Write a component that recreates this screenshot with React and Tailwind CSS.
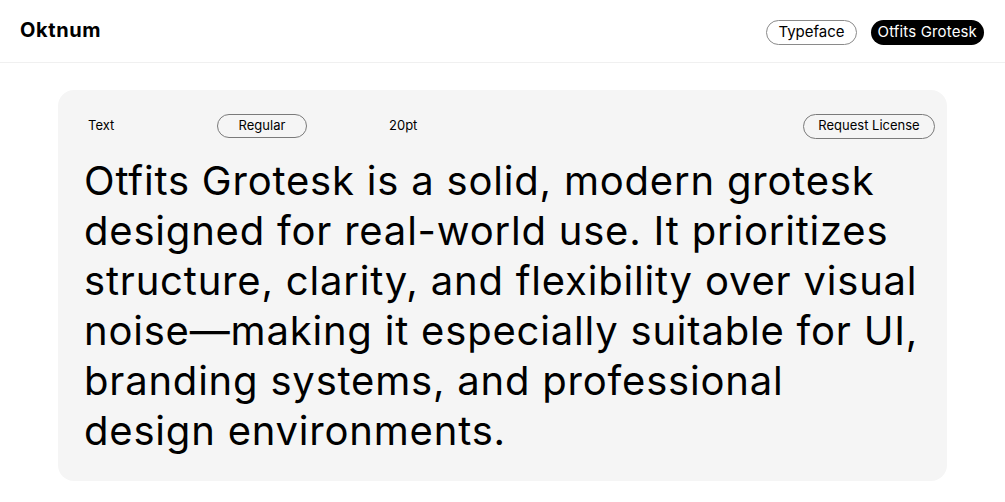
export default function App() {
  return (
    <div className="min-h-screen bg-white text-black font-['Inter',sans-serif]">
      <header className="flex h-[63px] items-center justify-between border-b border-[#f0f0f0] pl-5 pr-[21px]">
        <div className="-mt-[3px] text-[20px] font-bold tracking-[0.03em]">Oktnum</div>
        <nav className="mt-[3px] flex items-center gap-[14px] text-[15px]">
          <span className="flex h-[25px] items-center rounded-full border border-[#8a8a8a] px-[11px]">Typeface</span>
          <span className="flex h-[25px] items-center rounded-full bg-black px-[7px] tracking-[0.01em] text-white">Otfits Grotesk</span>
        </nav>
      </header>

      <section className="mx-[58px] mt-[27px] rounded-2xl bg-[#f5f5f5] pb-[25px] pl-7 pr-[12px] pt-[24px]">
        <div className="flex h-[24px] items-center text-[13px]">
          <span className="w-[131px] pl-[2px]">Text</span>
          <span className="flex h-[24px] w-[90px] items-center justify-center rounded-full border border-[#7a7a7a]">Regular</span>
          <span className="ml-[82px]">20pt</span>
          <span className="ml-auto flex h-[25px] w-[132px] items-center justify-center rounded-full border border-[#7a7a7a]">Request License</span>
        </div>
        <p className="-ml-0.5 mt-[18px] max-w-[835px] text-[40px] leading-[50px] tracking-[0.02em]">
          Otfits Grotesk is a solid, modern grotesk designed for real-world use. It prioritizes structure, clarity, and flexibility over visual noise—making it especially suitable for UI, branding systems, and professional design environments.
        </p>
      </section>
    </div>
  );
}
